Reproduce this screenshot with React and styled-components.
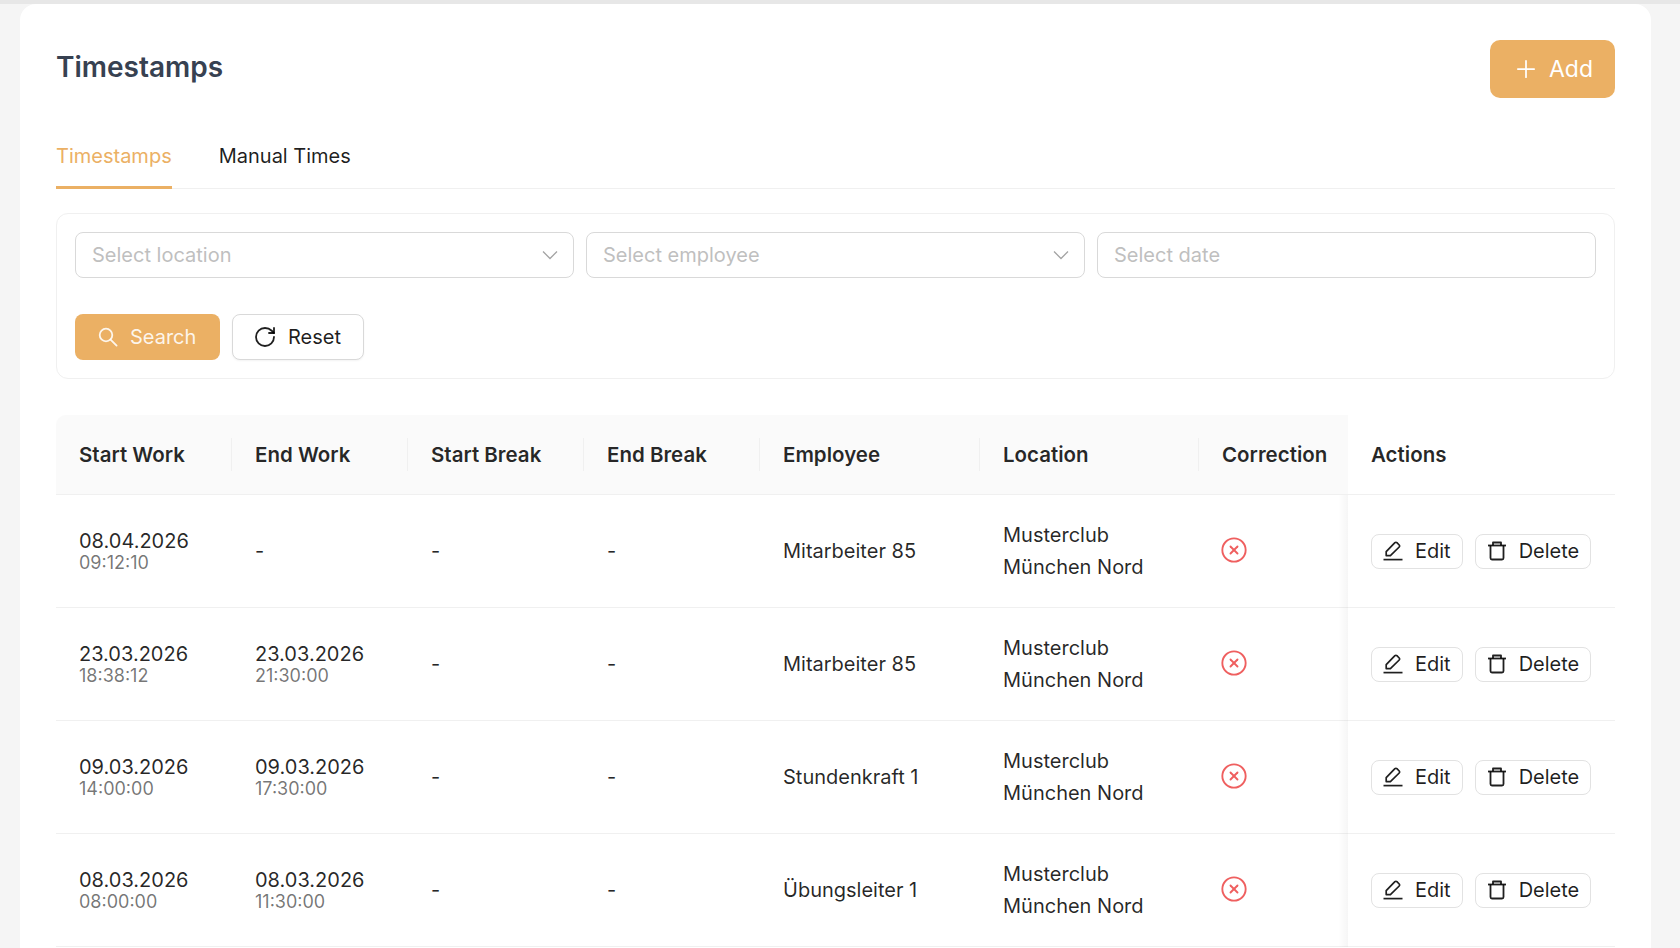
import React from 'react'
import styled, { createGlobalStyle } from 'styled-components'
import { Plus, RotateCw, CircleX } from 'lucide-react'

const GlobalStyle = createGlobalStyle`
  html, body {
    margin: 0;
    height: 948px;
    overflow: hidden;
    background: #f5f5f5;
    font-family: Inter, "Noto Sans", sans-serif;
    color: rgba(0, 0, 0, 0.88);
  }
  * { box-sizing: border-box; }
`

const Page = styled.div`
  height: 948px;
  padding: 0 29px 0 20px;
  border-top: 4px solid #e7e7e7;
  overflow: hidden;
`

const Card = styled.main`
  background: #fff;
  border-radius: 16px;
  padding: 36px 36px 0;
  height: 960px;
`

const TopBar = styled.header`
  display: flex;
  justify-content: space-between;
  align-items: flex-start;
  height: 58px;
`

const Title = styled.h1`
  margin: 9px 0 0;
  font-size: 28px;
  line-height: 36px;
  font-weight: 600;
  color: #374151;
`

const AddButton = styled.button`
  display: flex;
  align-items: center;
  gap: 9px;
  width: 125px;
  height: 58px;
  padding: 0 0 0 22px;
  border: 0;
  border-radius: 10px;
  background: #ebb064;
  color: #fff;
  font: 400 23px Inter, sans-serif;
`

const Tabs = styled.nav`
  display: flex;
  gap: 47px;
  height: 91px;
  padding-top: 41px;
  border-bottom: 1px solid #f0f0f0;
`

const Tab = styled.a`
  height: 50px;
  font-size: 20px;
  line-height: 30px;
  padding-top: 2px;
  color: ${p => (p.$active ? '#ebb064' : 'rgba(0, 0, 0, 0.88)')};
  border-bottom: ${p => (p.$active ? '3px solid #ebb064' : '0')};
`

const FilterBox = styled.section`
  margin-top: 24px;
  height: 166px;
  padding: 18px;
  border: 1px solid #f0f0f0;
  border-radius: 12px;
`

const FilterRow = styled.div`
  display: grid;
  grid-template-columns: repeat(3, 1fr);
  gap: 12px;
`

const Field = styled.div`
  display: flex;
  align-items: center;
  justify-content: space-between;
  height: 46px;
  padding: 0 15px 0 16px;
  border: 1px solid #d9d9d9;
  border-radius: 8px;
  font-size: 20px;
  color: #bfbfbf;
`

const ButtonRow = styled.div`
  display: flex;
  gap: 12px;
  margin-top: 36px;
`

const SearchButton = styled.button`
  display: flex;
  align-items: center;
  gap: 12px;
  width: 145px;
  height: 46px;
  padding: 0 0 0 23px;
  border: 0;
  border-radius: 8px;
  background: #ebb064;
  color: rgba(255, 255, 255, 0.88);
  font: 400 20px Inter, sans-serif;
`

const ResetButton = styled.button`
  display: flex;
  align-items: center;
  gap: 11px;
  width: 132px;
  height: 46px;
  padding: 0 0 0 20px;
  border: 1px solid #d9d9d9;
  border-radius: 8px;
  background: #fff;
  color: rgba(0, 0, 0, 0.88);
  font: 400 20px Inter, sans-serif;
  box-shadow: 0 1px 2px rgba(0, 0, 0, 0.05);
`

const Table = styled.table`
  margin-top: 36px;
  width: 1559px;
  table-layout: fixed;
  border-collapse: separate;
  border-spacing: 0;
`

const HeadCell = styled.th`
  height: 80px;
  padding: 0;
  background: ${p => (p.$fixed ? '#fff' : '#fafafa')};
  border-bottom: 1px solid #f0f0f0;
  text-align: left;
  font-size: 20.5px;
  font-weight: 600;
  &:first-child { border-top-left-radius: 10px; }
`

const HeadLabel = styled.div`
  display: flex;
  align-items: center;
  height: 33px;
  padding-left: 23px;
  border-right: ${p => (p.$last ? '0' : '1px solid #f0f0f0')};
  color: rgba(0, 0, 0, 0.85);
`

const Cell = styled.td`
  position: relative;
  height: 113px;
  padding: 0 0 0 23px;
  border-bottom: 1px solid #f0f0f0;
  font-size: 20px;
  line-height: 32px;
  font-weight: 400;
  color: rgba(0, 0, 0, 0.85);
`

const ActionCell = styled(Cell)`
  &::before {
    content: '';
    position: absolute;
    top: 0;
    bottom: -1px;
    left: -10px;
    width: 10px;
    background: linear-gradient(to left, rgba(0, 0, 0, 0.035), rgba(0, 0, 0, 0));
  }
`

const DateText = styled.div`
  font-size: 20px;
  line-height: 24px;
`

const TimeText = styled.div`
  font-size: 18px;
  line-height: 20px;
  color: rgba(0, 0, 0, 0.55);
`

const CorrectionIcon = styled(CircleX)`
  display: block;
  margin: -3px 0 0 -2px;
  color: #ef5f5f;
`

const Actions = styled.div`
  display: flex;
  gap: 12px;
`

const ActionButton = styled.button`
  display: flex;
  align-items: center;
  gap: 12px;
  height: 35px;
  padding: 0 11px;
  border: 1px solid #e2e2e2;
  border-radius: 8px;
  background: #fff;
  color: rgba(0, 0, 0, 0.88);
  font: 400 20px Inter, sans-serif;
`

const Chevron = () => (
  <svg width="16" height="10" viewBox="0 0 16 10" fill="none" stroke="#a3a3a3" strokeWidth="1.3">
    <path d="M1 1.5l7 7 7-7" />
  </svg>
)

const SearchIcon = () => (
  <svg width="20" height="20" viewBox="0 0 20 20" fill="none" stroke="currentColor" strokeWidth="1.8" strokeLinecap="round">
    <circle cx="8" cy="8" r="6.3" />
    <path d="M12.6 12.6l6 6" />
  </svg>
)

const EditIcon = () => (
  <svg width="20" height="20" viewBox="0 0 20 20" fill="none" stroke="currentColor" strokeWidth="1.7" strokeLinejoin="round">
    <path d="M3.2 14.6v-4L11.9 1.7a1.4 1.4 0 0 1 2 0l2.3 2.3a1.4 1.4 0 0 1 0 2L7.4 14.6z" />
    <path d="M0.5 18.6h19" />
  </svg>
)

const TrashIcon = () => (
  <svg width="20" height="20" viewBox="0 0 20 20" fill="none" stroke="currentColor" strokeWidth="1.8" strokeLinejoin="round">
    <path d="M1 4.5h18" />
    <path d="M3.5 4.5v12.5a1.5 1.5 0 0 0 1.5 1.5h10a1.5 1.5 0 0 0 1.5-1.5V4.5" />
    <path d="M6 4.5V1.5h8v3" />
  </svg>
)

const columns = [
  { name: 'Start Work', width: 176 },
  { name: 'End Work', width: 176 },
  { name: 'Start Break', width: 176 },
  { name: 'End Break', width: 176 },
  { name: 'Employee', width: 220 },
  { name: 'Location', width: 219 },
  { name: 'Correction', width: 149, last: true },
]

const rows = [
  { start: ['08.04.2026', '09:12:10'], end: null, employee: 'Mitarbeiter 85' },
  { start: ['23.03.2026', '18:38:12'], end: ['23.03.2026', '21:30:00'], employee: 'Mitarbeiter 85' },
  { start: ['09.03.2026', '14:00:00'], end: ['09.03.2026', '17:30:00'], employee: 'Stundenkraft 1' },
  { start: ['08.03.2026', '08:00:00'], end: ['08.03.2026', '11:30:00'], employee: 'Übungsleiter 1' },
]

function Stamp({ value }) {
  if (!value) return '-'
  return (
    <>
      <DateText>{value[0]}</DateText>
      <TimeText>{value[1]}</TimeText>
    </>
  )
}

export default function App() {
  return (
    <>
      <GlobalStyle />
      <Page>
        <Card>
          <TopBar>
            <Title>Timestamps</Title>
            <AddButton>
              <Plus size={28} strokeWidth={1.5} />
              Add
            </AddButton>
          </TopBar>

          <Tabs>
            <Tab $active>Timestamps</Tab>
            <Tab>Manual Times</Tab>
          </Tabs>

          <FilterBox>
            <FilterRow>
              <Field>Select location<Chevron /></Field>
              <Field>Select employee<Chevron /></Field>
              <Field>Select date</Field>
            </FilterRow>
            <ButtonRow>
              <SearchButton>
                <SearchIcon />
                Search
              </SearchButton>
              <ResetButton>
                <RotateCw size={24} strokeWidth={1.8} />
                Reset
              </ResetButton>
            </ButtonRow>
          </FilterBox>

          <Table>
            <colgroup>
              {columns.map(c => <col key={c.name} width={c.width} />)}
              <col width={267} />
            </colgroup>
            <thead>
              <tr>
                {columns.map(c => (
                  <HeadCell key={c.name}>
                    <HeadLabel $last={c.last}>{c.name}</HeadLabel>
                  </HeadCell>
                ))}
                <HeadCell $fixed>
                  <HeadLabel $last>Actions</HeadLabel>
                </HeadCell>
              </tr>
            </thead>
            <tbody>
              {rows.map((r, i) => (
                <tr key={i}>
                  <Cell><Stamp value={r.start} /></Cell>
                  <Cell><Stamp value={r.end} /></Cell>
                  <Cell>-</Cell>
                  <Cell>-</Cell>
                  <Cell>{r.employee}</Cell>
                  <Cell>Musterclub<br />München Nord</Cell>
                  <Cell><CorrectionIcon size={28} strokeWidth={1.6} /></Cell>
                  <ActionCell>
                    <Actions>
                      <ActionButton><EditIcon />Edit</ActionButton>
                      <ActionButton><TrashIcon />Delete</ActionButton>
                    </Actions>
                  </ActionCell>
                </tr>
              ))}
            </tbody>
          </Table>
        </Card>
      </Page>
    </>
  )
}
